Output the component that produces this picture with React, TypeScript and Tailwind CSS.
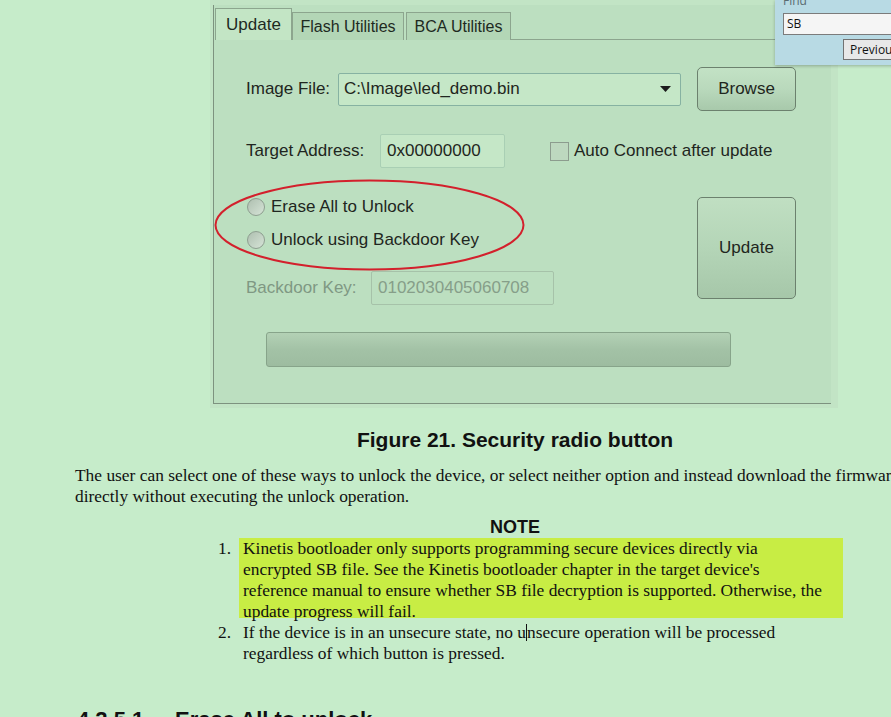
import React from 'react'

// Screenshot of the "Update" tab, as embedded in the doc page
function UpdatePane() {
  const ui = "font-['Liberation_Sans',Arial,sans-serif]"
  return (
    <div className={`ml-[210px] w-[628px] h-[408px] bg-[#c2e4c5] pt-[5px] pl-[3px] pr-[7px] pb-[4px] ${ui}`}>
      <div className="h-full bg-[#bcdfc0] border-l border-b border-[#7d927f] flex flex-col">
        {/* tabs */}
        <div className="h-[35px] flex items-end pl-[1px] text-[16px] text-[#1e2a1f]">
          <div className="h-[32px] w-[77px] bg-[#c3e5c5] border border-b-0 border-[#8ca58e] flex items-center justify-center text-[17px]">
            Update
          </div>
          <div className="h-[28px] w-[112px] bg-[#b3d6b6] border border-b-0 border-[#8ca58e] flex items-center justify-center">
            Flash Utilities
          </div>
          <div className="ml-[2px] h-[28px] w-[105px] bg-[#b3d6b6] border border-b-0 border-[#8ca58e] flex items-center justify-center">
            BCA Utilities
          </div>
          <div className="flex-1 border-b border-[#8ca58e]" />
        </div>

        {/* pane body */}
        <div className="flex-1 pl-[32px] text-[17px] text-[#1f2620]">
          {/* image file */}
          <div className="mt-[27px] h-[44px] flex items-center">
            <div className="w-[92px]">Image File:</div>
            <div className="w-[343px] h-[33px] bg-[#c5e7c7] border border-[#86b2a2] rounded-[2px] flex items-center pl-[5px] pr-[9px]">
              <span className="flex-1">C:\Image\led_demo.bin</span>
              <svg width="11" height="6" viewBox="0 0 11 6"><path d="M0 0h11L5.5 6z" fill="#1c1c1c" /></svg>
            </div>
            <button className="ml-[16px] w-[99px] h-[44px] rounded-[5px] border border-[#6c816e] bg-gradient-to-b from-[#c3e2c5] via-[#b9d9bc] to-[#a8c9ab] text-[17px] text-[#1f2620]">
              Browse
            </button>
          </div>

          {/* target address */}
          <div className="mt-[23px] h-[34px] flex items-center">
            <div className="w-[134px]">Target Address:</div>
            <div className="w-[125px] h-[34px] bg-[#c5e7c7] border border-[#a9cfb4] rounded-[2px] flex items-center pl-[6px]">
              0x00000000
            </div>
            <div className="ml-[45px] w-[19px] h-[19px] border border-[#8c9c8e] bg-[#bdd8bf]" />
            <div className="ml-[5px]">Auto Connect after update</div>
          </div>

          {/* security options + update button */}
          <div className="mt-[29px] flex">
            <div className="w-[451px] flex flex-col">
              <div className="mt-[1px] h-[18px] flex items-center">
                <div className="ml-[1px] w-[18px] h-[18px] rounded-full border border-[#8e9e90] bg-gradient-to-br from-[#aebfb0] to-[#d6e4d7]" />
                <span className="ml-[6px]">Erase All to Unlock</span>
              </div>
              <div className="mt-[15px] h-[18px] flex items-center">
                <div className="ml-[1px] w-[18px] h-[18px] rounded-full border border-[#8e9e90] bg-gradient-to-br from-[#aebfb0] to-[#d6e4d7]" />
                <span className="ml-[6px]">Unlock using Backdoor Key</span>
              </div>
              <div className="mt-[22px] h-[34px] flex items-center text-[#7f9883]">
                <div className="w-[125px]">Backdoor Key:</div>
                <div className="w-[183px] h-[34px] border border-[#a6c2a9] rounded-[2px] flex items-center pl-[6px] text-[#869e89]">
                  0102030405060708
                </div>
              </div>
            </div>
            <button className="w-[99px] h-[102px] rounded-[5px] border border-[#6c816e] bg-gradient-to-b from-[#c0dfc2] via-[#b4d5b7] to-[#a6c7a9] text-[17px] text-[#1f2620]">
              Update
            </button>
          </div>

          {/* progress */}
          <div className="mt-[27px] ml-[20px] w-[465px] h-[35px] rounded-[3px] border border-[#87a48a] bg-gradient-to-b from-[#b3d1b5] via-[#a3c2a6] to-[#9dbca0]" />
        </div>
      </div>
    </div>
  )
}

export default function App() {
  return (
    <div className="relative w-[891px] h-[717px] overflow-hidden bg-[#c6ecca] text-[#111] font-['Liberation_Serif','Times_New_Roman',serif]">
      <UpdatePane />

      {/* figure caption */}
      <div className="mt-[20px] ml-[139px] w-[752px] text-center font-['Liberation_Sans',Arial,sans-serif] font-bold text-[21px] leading-[24px]">
        Figure 21. Security radio button
      </div>

      <p className="mt-[13px] ml-[75px] text-[17.4px] leading-[21px] whitespace-nowrap">
        The user can select one of these ways to unlock the device, or select neither option and instead download the firmware
        <br />
        directly without executing the unlock operation.
      </p>

      <div className="mt-[10px] ml-[139px] w-[752px] text-center font-['Liberation_Sans',Arial,sans-serif] font-bold text-[18px] leading-[20px]">
        NOTE
      </div>

      <ol className="mt-[1px] text-[17.4px] leading-[21px] whitespace-nowrap">
        <li className="flex h-[84px]">
          <span className="w-[233px] text-right pr-[2px]">1.</span>
          <div className="ml-[6px] pl-[4px] w-[604px] h-[80px] bg-[#c8ed44]">
            Kinetis bootloader only supports programming secure devices directly via
            <br />
            encrypted SB file. See the Kinetis bootloader chapter in the target device's
            <br />
            reference manual to ensure whether SB file decryption is supported. Otherwise, the
            <br />
            update progress will fail.
          </div>
        </li>
        <li className="flex">
          <span className="w-[233px] text-right pr-[2px]">2.</span>
          <div className="ml-[10px]">
            If the device is in an unsecure state, no u
            <span className="inline-block w-0 h-[17px] border-l border-[#111] align-[-3px]" />
            nsecure operation will be processed
            <br />
            regardless of which button is pressed.
          </div>
        </li>
      </ol>

      <h2 className="mt-[43px] ml-[77px] font-['Liberation_Sans',Arial,sans-serif] font-bold text-[22px] leading-[26px] whitespace-nowrap">
        <span className="inline-block w-[98px]">4.2.5.1</span>Erase All to unlock
      </h2>

      {/* red annotation ellipse */}
      <svg className="absolute left-0 top-0 pointer-events-none" width="891" height="717">
        <ellipse cx="369.5" cy="225" rx="154" ry="44.5" fill="none" stroke="#d3202c" strokeWidth="2" />
      </svg>

      {/* find popup */}
      <div className="absolute left-[775px] top-0 w-[130px] h-[65px] bg-[#b8dae4] shadow-[0_1px_3px_rgba(0,0,0,0.25)] font-['Open_Sans',Arial,sans-serif]">
        <div className="absolute left-[8px] top-[-8px] text-[12px] text-[#5a6a70]">Find</div>
        <div className="absolute left-[8px] top-[13px] w-[130px] h-[22px] bg-[#f5f5f5] border border-[#7b7b7b] text-[12px] leading-[20px] pl-[3px] text-[#111]">
          SB
        </div>
        <div className="absolute left-[68px] top-[39px] w-[70px] h-[21px] bg-[#e8e8e8] border border-[#727272] text-[12px] leading-[19px] pl-[6px] text-[#111]">
          Previous
        </div>
      </div>
    </div>
  )
}
